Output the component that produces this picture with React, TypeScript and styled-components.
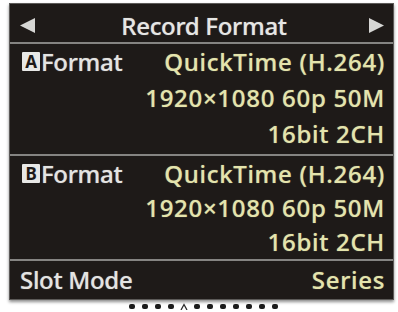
import styled, { createGlobalStyle } from "styled-components";

const GlobalStyle = createGlobalStyle`
  body {
    margin: 0;
    background: #ffffff;
    font-family: "Noto Sans", "DejaVu Sans", sans-serif;
  }
`;

const Page = styled.div`
  width: 398px;
  height: 312px;
  padding: 3px 0 0 9px;
  box-sizing: border-box;
  overflow: hidden;
  display: flex;
  flex-direction: column;
`;

const Screen = styled.div`
  width: 385px;
  height: 297px;
  box-sizing: border-box;
  background: #1e1a18;
  border: 1px solid #5c5a58;
  box-shadow: 0 2px 3px rgba(0, 0, 0, 0.45);
  display: flex;
  flex-direction: column;
`;

const TitleBar = styled.div`
  height: 40px;
  box-sizing: border-box;
  padding: 5px 8px 0 9px;
  display: flex;
  align-items: center;
  justify-content: space-between;
  border-bottom: 2px solid #858482;
`;

const Title = styled.div`
  font-size: 24px;
  font-weight: 500;
  color: #e6e6e4;
  letter-spacing: -0.3px;
  margin-left: 4px;
  text-shadow: 0 0 1px rgba(230, 230, 228, 0.6);
`;

const Arrow = styled.svg`
  width: 17px;
  height: 17px;
  display: block;
`;

const Block = styled.div<{ $h: number; $pb?: number; $line?: boolean }>`
  height: ${(p) => p.$h}px;
  box-sizing: border-box;
  padding-bottom: ${(p) => p.$pb ?? 0}px;
  display: flex;
  flex-direction: column;
  border-bottom: ${(p) => (p.$line ? "2px solid #858482" : "none")};
`;

const Row = styled.div<{ $pl?: number }>`
  flex: 1;
  display: flex;
  align-items: center;
  justify-content: space-between;
  padding: 0 8px 0 ${(p) => p.$pl ?? 12}px;
  font-size: 24px;
  font-weight: 500;
  white-space: nowrap;
`;

const Label = styled.span`
  display: flex;
  align-items: center;
  color: #e4e4e2;
  letter-spacing: -0.3px;
  text-shadow: 0 0 1px rgba(228, 228, 226, 0.6);
`;

const Value = styled.span`
  color: #e4e4ad;
  margin-left: auto;
  letter-spacing: 0.7px;
  text-shadow: 0 0 1px rgba(228, 228, 173, 0.6);
`;

const Badge = styled.span`
  width: 18px;
  height: 19px;
  margin-right: 1px;
  background: #e8e8e6;
  color: #1e1a18;
  font-size: 17px;
  font-weight: bold;
  line-height: 19px;
  text-align: center;
  border-radius: 1px;
  text-shadow: none;
`;

const Dots = styled.div`
  display: flex;
  justify-content: center;
  align-items: center;
  gap: 7px;
  margin-top: 3px;
  width: 385px;
  padding-left: 2px;
`;

const Dot = styled.span`
  width: 6px;
  height: 5px;
  border-radius: 2px;
  background: #1c1c1c;
`;

const Caret = styled.svg`
  width: 8px;
  height: 7px;
  display: block;
  margin: 0 -1px;
`;

function Rows({ badge, lines }: { badge?: string; lines: string[] }) {
  return (
    <>
      {lines.map((v, i) => (
        <Row key={i}>
          {i === 0 && (
            <Label>
              {badge && <Badge>{badge}</Badge>}
              Format
            </Label>
          )}
          <Value>{v}</Value>
        </Row>
      ))}
    </>
  );
}

export default function App() {
  const fmt = ["QuickTime (H.264)", "1920×1080 60p 50M", "16bit 2CH"];
  return (
    <>
      <GlobalStyle />
      <Page>
        <Screen>
          <TitleBar>
            <Arrow viewBox="0 0 17 17">
              <polygon points="16,1 16,16 1,8.5" fill="#d6d6d4" />
            </Arrow>
            <Title>Record Format</Title>
            <Arrow viewBox="0 0 17 17">
              <polygon points="1,1 1,16 16,8.5" fill="#d6d6d4" />
            </Arrow>
          </TitleBar>
          <Block $h={112} $pb={3} $line>
            <Rows badge="A" lines={fmt} />
          </Block>
          <Block $h={105} $line>
            <Rows badge="B" lines={fmt} />
          </Block>
          <Block $h={36}>
            <Row $pl={10}>
              <Label>Slot Mode</Label>
              <Value>Series</Value>
            </Row>
          </Block>
        </Screen>
        <Dots>
          {Array.from({ length: 12 }).map((_, i) =>
            i === 4 ? (
              <Caret key={i} viewBox="0 0 8 7">
                <polyline points="1,7 4,1.5 7,7" fill="none" stroke="#2a2a2a" strokeWidth="1.3" />
              </Caret>
            ) : (
              <Dot key={i} />
            )
          )}
        </Dots>
      </Page>
    </>
  );
}
